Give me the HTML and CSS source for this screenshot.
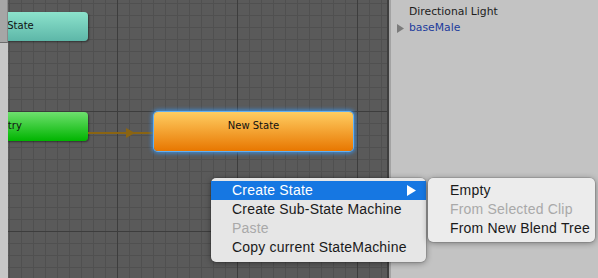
FILE: index.html
```html
<!DOCTYPE html>
<html>
<head>
<meta charset="utf-8">
<link rel="stylesheet" href="styles.css">
</head>
<body>
<div class="app">
  <div class="strip"><div class="strip-top"></div></div>
  <div class="canvas">
    <div class="node node-teal">State</div>
    <div class="node node-green">Entry</div>
    <svg class="transition" width="66" height="12" viewBox="0 0 66 12">
      <line x1="0" y1="6" x2="66" y2="6" stroke="#8a6412" stroke-width="2"/>
      <polygon points="38,1 47,6 38,11" fill="#8a6412"/>
    </svg>
    <div class="node node-orange">New State</div>
  </div>
  <div class="divider"></div>
  <div class="panel">
    <div class="row">Directional Light</div>
    <div class="row row-blue"><svg class="tri" width="7" height="9" viewBox="0 0 7 9"><polygon points="0,0 7,4.5 0,9" fill="#7b7b7b"/></svg>baseMale</div>
  </div>
</div>
<div class="menu">
  <div class="item active">Create State<svg class="arrow" width="9" height="11" viewBox="0 0 9 11"><polygon points="0,0 9,5.5 0,11" fill="#fff"/></svg></div>
  <div class="item">Create Sub-State Machine</div>
  <div class="item disabled">Paste</div>
  <div class="item">Copy current StateMachine</div>
</div>
<div class="menu submenu">
  <div class="item">Empty</div>
  <div class="item disabled">From Selected Clip</div>
  <div class="item">From New Blend Tree</div>
</div>
</body>
</html>
```
FILE: styles.css
```css
html, body {
  margin: 0;
  padding: 0;
  width: 598px;
  height: 278px;
  overflow: hidden;
  background: #c3c3c3;
}
.app {
  display: flex;
  width: 598px;
  height: 278px;
}
.strip {
  width: 8px;
  flex: none;
  background: #c6c6c6;
}
.strip-top {
  height: 43px;
  background: #a6a6a6;
  border-bottom: 1px solid #6c6c6c;
  border-right: 1px solid #8a8a8a;
  box-sizing: border-box;
}
.canvas {
  position: relative;
  width: 379px;
  flex: none;
  overflow: hidden;
  background:
    linear-gradient(90deg, #3d3d3d 1px, transparent 1px) 109px 0 / 120px 120px,
    linear-gradient(180deg, #3d3d3d 1px, transparent 1px) 0 111px / 120px 120px,
    linear-gradient(90deg, #505050 1px, transparent 1px) 1px 0 / 12px 12px,
    linear-gradient(180deg, #505050 1px, transparent 1px) 0 3px / 12px 12px,
    #5a5a5a;
}
.node {
  position: absolute;
  box-sizing: border-box;
  padding-top: 7px;
  line-height: 14px;
  text-align: center;
  font-family: "DejaVu Sans", sans-serif;
  font-size: 10px;
  color: #111;
  border-radius: 4px;
  box-shadow: 1px 1px 2px rgba(0,0,0,0.45);
}
.node-teal {
  left: -55px;
  top: 12px;
  width: 135px;
  height: 29px;
  background: linear-gradient(#8ce2cc, #5db7a8);
}
.node-green {
  left: -79px;
  top: 112px;
  width: 159px;
  height: 29px;
  background: linear-gradient(#6ee06e, #00b500);
}
.node-orange {
  left: 146px;
  top: 112px;
  width: 199px;
  height: 39px;
  background: linear-gradient(#ffcd62, #e87700);
  box-shadow: 0 0 0 1px #63b0f2, 0 0 4px 2px #3a8fe2;
}
.transition {
  position: absolute;
  left: 80px;
  top: 127px;
}
.divider {
  width: 4px;
  flex: none;
  background: linear-gradient(90deg, #3e3e3e 2px, #a3a3a3 2px);
}
.panel {
  flex: 1;
  background: #c3c3c3;
  padding: 4px 0 0 18px;
  font-family: "DejaVu Sans", sans-serif;
  font-size: 10.8px;
  color: #1c1c1c;
}
.row {
  height: 16px;
  line-height: 16px;
  position: relative;
}
.row-blue {
  color: #1d3c9d;
}
.tri {
  position: absolute;
  left: -12px;
  top: 4px;
}
.menu {
  position: absolute;
  left: 211px;
  top: 178px;
  width: 215px;
  padding: 3px 0 5px;
  background: #e6e6e6;
  border-radius: 5px;
  box-shadow: 0 1px 6px rgba(0,0,0,0.4), 0 0 0 0.5px rgba(0,0,0,0.2);
  font-family: "Liberation Sans", sans-serif;
  font-size: 14px;
  letter-spacing: 0.2px;
  color: #1a1a1a;
}
.item {
  height: 19px;
  line-height: 19px;
  padding-left: 21px;
  position: relative;
}
.item.active {
  background: #1677e2;
  color: #fff;
}
.item.disabled {
  color: #a9a9a9;
}
.arrow {
  position: absolute;
  left: 196px;
  top: 4px;
}
.submenu {
  left: 428px;
  top: 178px;
  width: 167px;
  padding: 3px 0 4px;
  background: #ececec;
}
.submenu .item {
  padding-left: 22px;
}
```
